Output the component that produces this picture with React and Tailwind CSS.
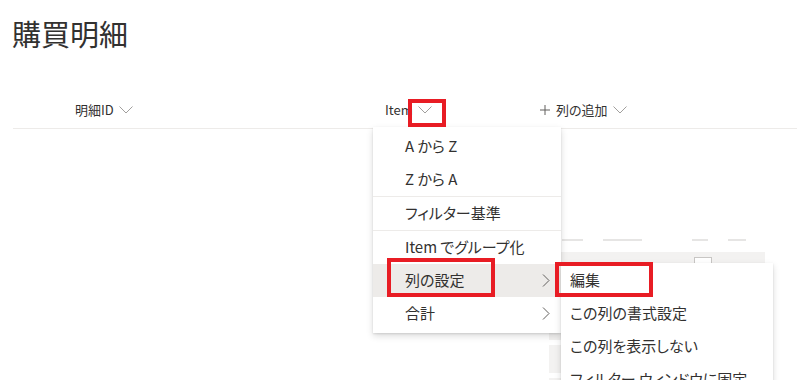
import React from 'react';

const font = { fontFamily: '"Noto Sans CJK JP", "Noto Sans", sans-serif' };

function ChevronDown() {
  return (
    <svg width="14" height="8" viewBox="0 0 14 8" className="ml-[5px]">
      <path d="M0.5 0.5 L7 7 L13.5 0.5" fill="none" stroke="#a19f9d" strokeWidth="1" />
    </svg>
  );
}

function ChevronRight() {
  return (
    <svg width="8" height="13" viewBox="0 0 8 13">
      <path d="M1 0.5 L7 6.5 L1 12.5" fill="none" stroke="#605e5c" strokeWidth="1" />
    </svg>
  );
}

function MenuItem({ label, sub, active }) {
  return (
    <div className={`h-[33px] flex items-center pl-[32px] pr-[11px] ${active ? 'bg-[#edebe9]' : ''}`}>
      <span className="flex-1 text-[15px] text-[#323130] [font-feature-settings:'palt']">{label}</span>
      {sub && <ChevronRight />}
    </div>
  );
}

const Divider = () => <div className="h-px bg-[#edebe9]" />;

export default function App() {
  return (
    <div className="relative w-[797px] h-[380px] overflow-hidden bg-white text-[#323130]" style={font}>
      {/* title */}
      <div className="h-[52px] pt-[13px] pl-[12px] text-[29px] leading-[40px] [font-feature-settings:'palt']">購買明細</div>

      {/* column headers */}
      <div className="ml-[13px] mt-[40px] h-[37px] flex items-center border-b border-[#edebe9] text-[13px] [font-feature-settings:'palt']">
        <div className="w-[372px] pl-[62px] flex items-center">
          <span>明細ID</span>
          <ChevronDown />
        </div>
        <div className="w-[155px] flex items-center">
          <span>Item</span>
          <ChevronDown />
        </div>
        <div className="flex items-center">
          <svg width="10" height="10" viewBox="0 0 10 10" className="mr-[6px]">
            <path d="M5 0 V10 M0 5 H10" stroke="#605e5c" strokeWidth="1" />
          </svg>
          <span>列の追加</span>
          <ChevronDown />
        </div>
      </div>

      {/* shimmer placeholder rows behind the menus */}
      <div className="ml-[549px] mt-[110px] w-[216px]">
        <div className="flex gap-[20px] h-[2px] pl-[13px]">
          <div className="w-[21px] bg-[#e6e5e4]" />
          <div className="w-[39px] bg-[#e6e5e4]" />
          <div className="w-[16px] ml-[30px] bg-[#e6e5e4]" />
          <div className="w-[18px] bg-[#e6e5e4]" />
        </div>
        <div className="mt-[11px] h-[88px] bg-[#f3f2f1] pt-[5px] pl-[145px]">
          <div className="w-[18px] h-[18px] border border-[#c8c6c4] bg-white" />
        </div>
        <div className="mt-[5px] h-[28px] bg-[#f3f2f1]" />
        <div className="mt-[5px] h-[28px] bg-[#f3f2f1]" />
      </div>

      {/* column context menu */}
      <div className="absolute left-[373px] top-[127px] w-[188px] bg-white py-[3px] shadow-[0_3px_7px_rgba(0,0,0,0.14),0_0.6px_1.8px_rgba(0,0,0,0.11)]">
        <MenuItem label="A から Z" />
        <MenuItem label="Z から A" />
        <Divider />
        <MenuItem label="フィルター基準" />
        <Divider />
        <MenuItem label="Item でグループ化" />
        <MenuItem label="列の設定" sub active />
        <MenuItem label="合計" sub />
      </div>

      {/* submenu */}
      <div className="absolute left-[561px] top-[263px] w-[212px] bg-white pt-[1px] shadow-[0_3px_7px_rgba(0,0,0,0.14),0_0.6px_1.8px_rgba(0,0,0,0.11)]">
        {['編集', 'この列の書式設定', 'この列を表示しない', 'フィルター ウィンドウに固定'].map((t) => (
          <div key={t} className="h-[33px] flex items-center pl-[9px] text-[15px] [font-feature-settings:'palt'] whitespace-nowrap">
            {t}
          </div>
        ))}
      </div>

      {/* red annotation boxes */}
      <div className="absolute left-[408px] top-[99px] w-[38px] h-[28px] border-[4px] border-[#e81c24]" />
      <div className="absolute left-[387px] top-[258px] w-[108px] h-[39px] border-[4px] border-[#e81c24]" />
      <div className="absolute left-[555px] top-[262px] w-[98px] h-[35px] border-[4px] border-[#e81c24]" />
    </div>
  );
}
